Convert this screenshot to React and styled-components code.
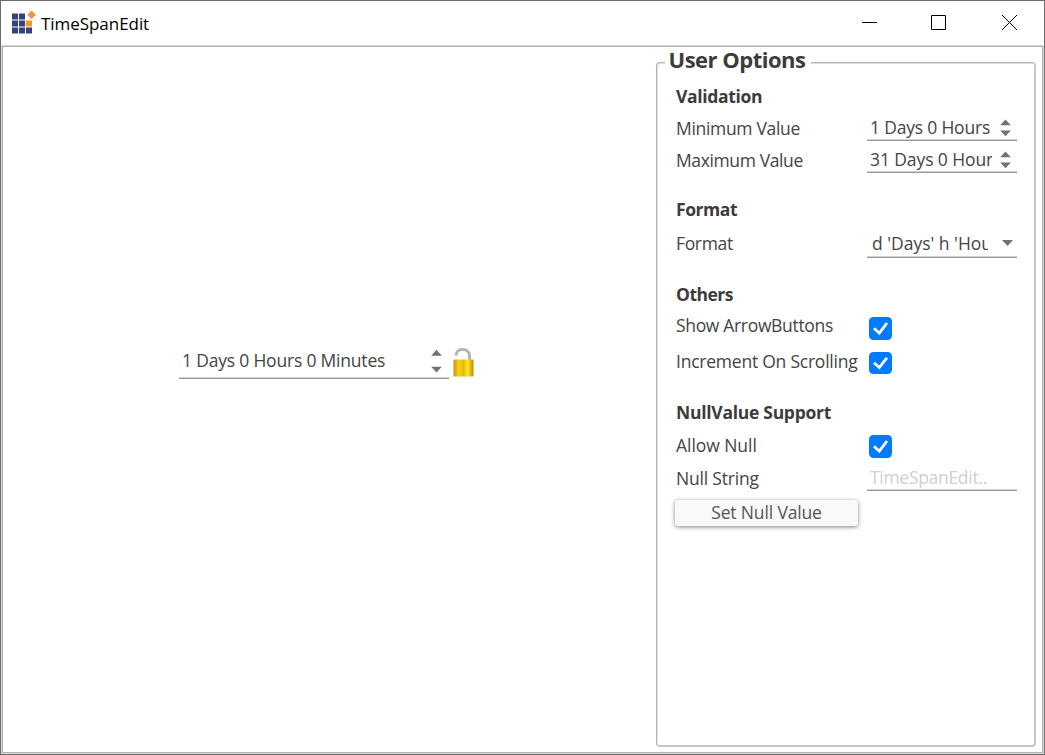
import React from "react";
import styled, { createGlobalStyle } from "styled-components";

const GlobalStyle = createGlobalStyle`
  * { box-sizing: border-box; }
  html, body { margin: 0; background: #fff; }
  body { font-family: "Open Sans", "Noto Sans", sans-serif; font-size: 17.5px; color: #444; overflow: hidden; }
`;

const Window = styled.div`
  width: 1045px;
  height: 755px;
  display: flex;
  flex-direction: column;
  border: 1px solid #6b6b6b;
  background: #fff;
`;

const TitleBar = styled.header`
  height: 44px;
  flex: none;
  display: flex;
  align-items: flex-start;
  padding-left: 10px;
`;

const AppIcon = styled.svg`
  width: 24px;
  height: 24px;
  margin: 9px 5px 0 1px;
  flex: none;
`;

const AppTitle = styled.span`
  margin-top: 11px;
  line-height: 24px;
  font-size: 17px;
  letter-spacing: ${(p) => p.$ls}px;
  color: #000;
  flex: 1;
`;

const Caption = styled.button`
  width: 70px;
  height: 43px;
  padding: 0;
  border: 0;
  background: none;
  display: block;
  flex: none;
  svg { display: block; }
`;

const Client = styled.main`
  flex: 1;
  display: flex;
  border: 1px solid #d9d9d9;
  box-shadow: inset 0 0 0 1px #b0b0b0;
  padding: 1px;
`;

const Stage = styled.section`
  flex: 1;
  display: flex;
  align-items: flex-start;
  padding: 300px 0 0 176px;
`;

const Options = styled.section`
  width: 380px;
  height: 685px;
  margin: 15px 6px 0 0;
  border: 2px solid #c6c6c6;
  border-width: 1px 2px 2px 1px;
  border-top-color: #b4b4b4;
  border-left-color: #b4b4b4;
  border-radius: 4px;
  box-shadow: inset 1px 1px 0 #dedede;
  flex: none;
  padding-left: 19px;
`;

const OptionsTitle = styled.h1`
  width: 146px;
  height: 26px;
  margin: -15px 0 0 -11px;
  padding-left: 3.5px;
  background: #fff;
  font-size: 22px;
  line-height: 23px;
  font-weight: 700;
  letter-spacing: ${(p) => p.$ls}px;
  white-space: nowrap;
  color: #3c3c3c;
`;

const Heading = styled.h2`
  margin: ${(p) => p.$gap}px 0 0;
  height: 24px;
  line-height: 24px;
  font-size: 17.5px;
  font-weight: 700;
  letter-spacing: ${(p) => p.$ls}px;
  color: #3c3c3c;
`;

const Row = styled.div`
  display: grid;
  grid-template-columns: 191px 150px;
  align-items: start;
  height: ${(p) => p.$h}px;
  margin-top: ${(p) => p.$gap || 0}px;
`;

const Label = styled.span`
  padding-top: ${(p) => p.$top}px;
  line-height: 24px;
  letter-spacing: ${(p) => p.$ls}px;
  white-space: nowrap;
`;

const Field = styled.div`
  width: ${(p) => p.$w || 150}px;
  height: ${(p) => p.$h || 32}px;
  display: flex;
  border-bottom: 1px solid #989898;
  box-shadow: inset 0 -1px 0 #d0d0d0;
`;

const Value = styled.span`
  flex: none;
  width: ${(p) => p.$w}px;
  height: 28px;
  margin: ${(p) => p.$top}px 0 0 ${(p) => p.$left}px;
  line-height: 24px;
  letter-spacing: ${(p) => p.$ls}px;
  color: ${(p) => p.$color || "#444"};
  white-space: nowrap;
  overflow: hidden;
`;

const Arrows = styled.svg`
  flex: none;
  width: 11px;
  height: 32px;
  margin-left: ${(p) => p.$left}px;
  fill: #717171;
`;

const Check = styled.svg`
  width: 23px;
  height: ${(p) => p.$h || 23}px;
  margin: ${(p) => p.$top}px 0 0 2px;
`;

const NullButton = styled.button`
  display: block;
  width: 183px;
  height: 26px;
  margin: 9px 0 0 -1px;
  padding: 0 0 2px;
  border: 0;
  border-radius: 3px;
  background: #f9f9f9;
  box-shadow: 0 1px 4px rgba(0, 0, 0, 0.5);
  font: inherit;
  line-height: 24px;
  letter-spacing: ${(p) => p.$ls}px;
  color: #555;
`;

const Lock = styled.svg`
  width: 24px;
  height: 32px;
  margin-left: 3px;
`;

const COMPACT_SPIN = "M.2 16.300 5.500 10.500l5.300 5.800z M.2 21.500 5.500 27.300l5.300-5.800z";
const WIDE_SPIN = "M.2 8.800 5.500 2.800l5.300 6z M.2 19.800 5.500 25.600l5.300-5.800z";

function Spin({ left, wide }) {
  return (
    <Arrows viewBox="0 0 11 32" $left={left}>
      <path d={wide ? WIDE_SPIN : COMPACT_SPIN} />
    </Arrows>
  );
}

function Checkbox({ top, h }) {
  return (
    <Check viewBox="0 0 23 23" preserveAspectRatio="none" $top={top} $h={h}>
      <rect width="23" height="23" rx="4.500" fill="#007aff" />
      <path d="M5 11.300 10.300 16.200 18 6" fill="none" stroke="#fff" strokeWidth="2.800" />
    </Check>
  );
}

export default function App() {
  return (
    <>
      <GlobalStyle />
      <Window>
        <TitleBar>
          <AppIcon viewBox="0 0 24 24">
            <g fill="#34417f">
              <path d="M0 3.500h6v6H0zM7 3.500h6v6H7zM0 10.500h6v6H0zM7 10.500h6v6H7zM0 17.500h6v6H0zM7 17.500h6v6H7zM14 17.500h6v6h-6z" />
            </g>
            <g fill="#f5962d">
              <path d="M14 10.500h6v6h-6zM19.500 .5 24 4.700 19.500 9 15.300 4.700z" />
            </g>
          </AppIcon>
          <AppTitle $ls={-0.05}>TimeSpanEdit</AppTitle>
          <Caption aria-label="Minimize">
            <svg width="70" height="43" stroke="#000" fill="none"><path d="M28 21.500h15" /></svg>
          </Caption>
          <Caption aria-label="Maximize">
            <svg width="70" height="43" stroke="#000" fill="none"><path d="M27.500 14.500h14v14h-14z" /></svg>
          </Caption>
          <Caption aria-label="Close">
            <svg width="70" height="43" stroke="#000" fill="none"><path d="M28 14l15 15M43 14 28 29" /></svg>
          </Caption>
        </TitleBar>
        <Client>
          <Stage>
            <Field $w={270} $h={32}>
              <Value $left={3} $top={1} $w={245} $ls={-0.2}>1 Days 0 Hours 0 Minutes</Value>
              <Spin left={4} wide />
            </Field>
            <Lock viewBox="0 0 24 32">
              <defs>
                <linearGradient id="brass">
                  <stop offset="0" stopColor="#c99100" />
                  <stop offset=".25" stopColor="#f7d21c" />
                  <stop offset=".5" stopColor="#eab90c" />
                  <stop offset=".72" stopColor="#ffe52e" />
                  <stop offset="1" stopColor="#c18b00" />
                </linearGradient>
              </defs>
              <path d="M4.300 8.500V7C5 .7 17 .7 17.500 8v5" fill="none" stroke="#b4b4b4" strokeWidth="3" />
              <rect x="1.500" y="12.500" width="20" height="17" rx="1" fill="url(#brass)" />
            </Lock>
          </Stage>
          <Options>
            <OptionsTitle $ls={-0.5}>User Options</OptionsTitle>
            <Heading $gap={10} $ls={-0.35}>Validation</Heading>
            <Row $h={32} $gap={1}>
              <Label $top={7} $ls={-0.32}>Minimum Value</Label>
              <Field>
                <Value $left={3} $top={6} $w={123} $ls={-0.2}>1 Days 0 Hours</Value>
                <Spin left={6.5} />
              </Field>
            </Row>
            <Row $h={32}>
              <Label $top={7} $ls={-0.38}>Maximum Value</Label>
              <Field>
                <Value $left={3} $top={6} $w={122} $ls={-0.1}>31 Days 0 Hours</Value>
                <Spin left={7.5} />
              </Field>
            </Row>
            <Heading $gap={24} $ls={-0.45}>Format</Heading>
            <Row $h={32} $gap={5}>
              <Label $top={5} $ls={-0.35}>Format</Label>
              <Field>
                <Value $left={5} $top={5} $w={116} $ls={-0.02}>d 'Days' h 'Hours'</Value>
                <Arrows viewBox="0 0 11 32" $left={14}>
                  <path d="M0 14h11L5.500 20z" />
                </Arrows>
              </Field>
            </Row>
            <Heading $gap={24} $ls={-0.5}>Others</Heading>
            <Row $h={36} $gap={7}>
              <Label $top={0} $ls={-0.33}>Show ArrowButtons</Label>
              <Checkbox top={4} />
            </Row>
            <Row $h={27}>
              <Label $top={0} $ls={-0.23}>Increment On Scrolling</Label>
              <Checkbox top={3} h={22} />
            </Row>
            <Heading $gap={24} $ls={-0.28}>NullValue Support</Heading>
            <Row $h={26} $gap={9}>
              <Label $top={0} $ls={-0.05}>Allow Null</Label>
              <Checkbox top={2} />
            </Row>
            <Row $h={32}>
              <Label $top={7} $ls={-0.2}>Null String</Label>
              <Field>
                <Value $left={3} $top={6} $w={140} $ls={-0.3} $color="#d0d0d0">TimeSpanEdit..</Value>
              </Field>
            </Row>
            <NullButton $ls={-0.15}>Set Null Value</NullButton>
          </Options>
        </Client>
      </Window>
    </>
  );
}
